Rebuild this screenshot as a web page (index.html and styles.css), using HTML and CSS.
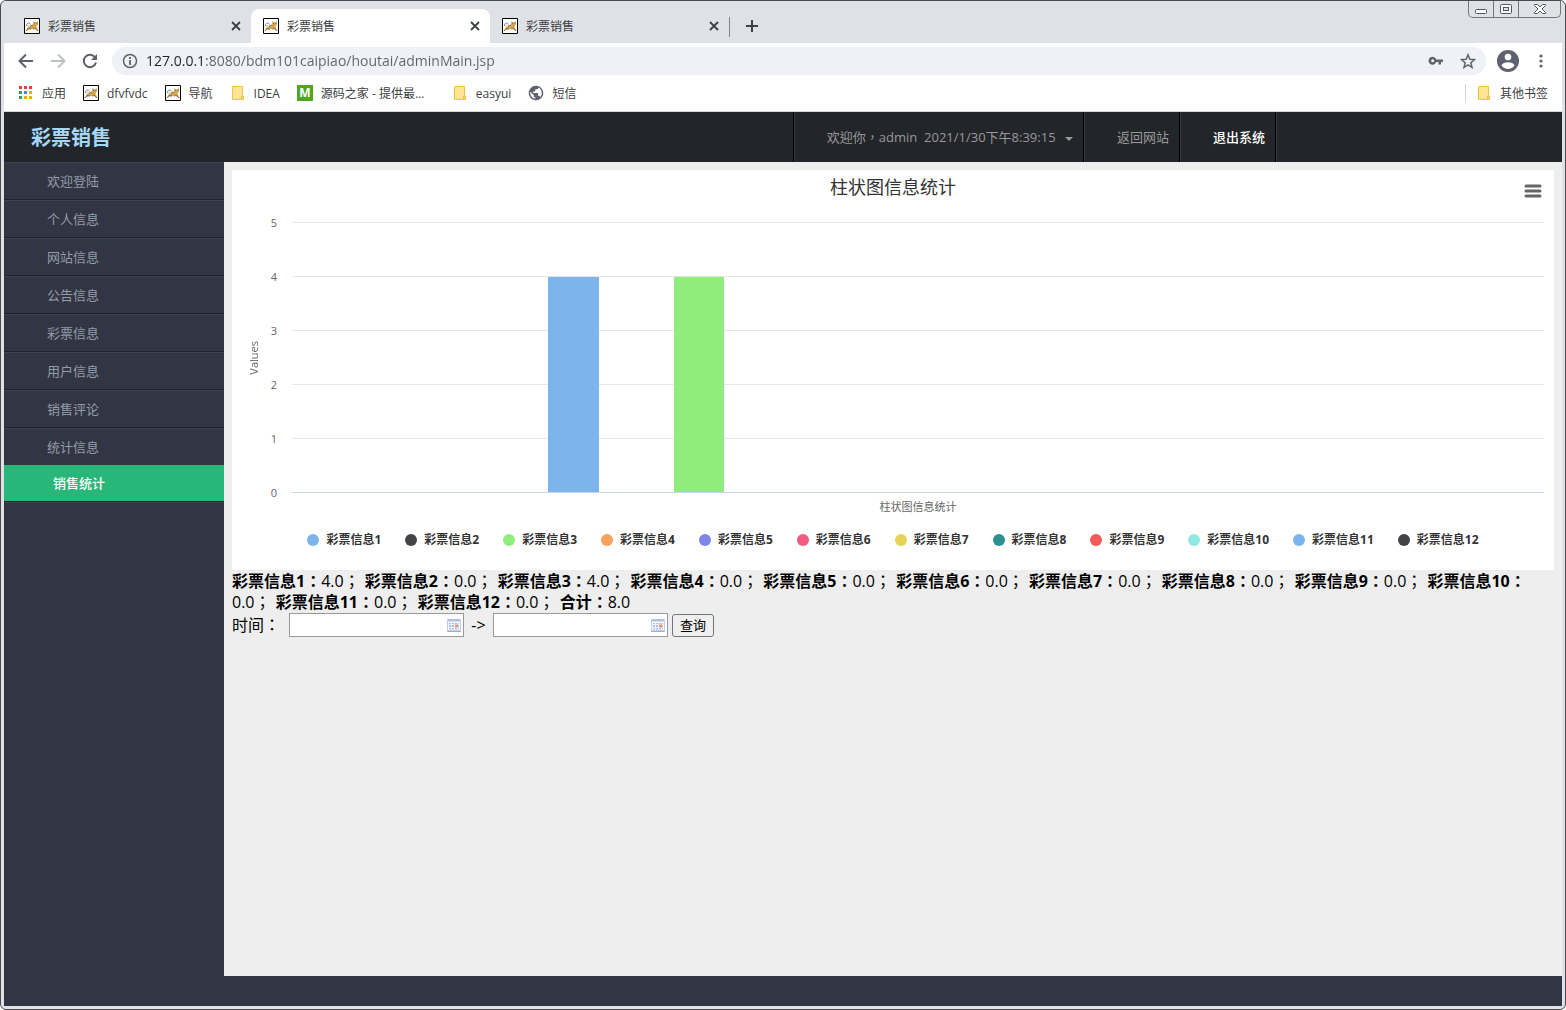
FILE: index.html
```html
<!DOCTYPE html>
<html lang="zh-CN">
<head>
    <meta charset="UTF-8">
    <meta name="viewport" content="width=device-width, initial-scale=1.0">
    <title>彩票销售</title>
    <link rel="stylesheet" href="styles.css">
</head>
<body>
    <!-- shared icons -->
    <svg class="sprite" aria-hidden="true">
        <symbol id="icon-cat" viewBox="0 0 16 16">
            <path d="M.5.5h15v15H.5z" fill="#fff" stroke="#000"/>
            <path d="M2 13l1.500-3.500L6 8l3-1.500.5-3.500 1.500 1.200h1.500L14 3v3.500l-1.500 1.500.5 2 1.500 2.500h-1.500L10.500 10.500 8 11l-3 .5z" fill="#d5a54c"/>
            <path d="M1.800 13.200L4 10.500l3 .5M6 8.500l3-1.500M14 13l-2.500-2.500-2.500.5" fill="none" stroke="#71604a" stroke-width=".8"/>
            <path d="M2.500 8c-.8-3 3.500-4 4-1.500M10 5.500h1M12.300 5.500h1" fill="none" stroke="#667" stroke-width=".8"/>
            <path d="M3 7.500c1-1.500 2-1.500 3 0L4 9z" fill="#cdd3de"/>
        </symbol>
        <symbol id="icon-close" viewBox="0 0 10 10">
            <path d="M1 1l8 8M9 1L1 9" fill="none" stroke="#3c4043" stroke-width="1.800"/>
        </symbol>
        <symbol id="icon-folder" viewBox="0 0 16 16">
            <path d="M2.500 1.500h10v9.500h1v3.500h-11z" fill="#ffe592" stroke="#f0c53f"/>
            <path d="M11.500 14v-3h1.500v3" fill="#ffe592" stroke="#f0c53f"/>
        </symbol>
        <symbol id="icon-calendar" viewBox="0 0 14 14">
            <path d="M.5 1.500h13v11H.5z" fill="#fff" stroke="#c3cde3"/>
            <path d="M1 1h12v2.500H1z" fill="#b3c0dc"/>
            <path d="M2 5h10v6.500H2z" fill="#a9c0ee"/>
            <path d="M1 6.500h12M1 9.500h12M4.500 4v8M7.500 4v8M10.500 4v8" stroke="#eef3fd" fill="none"/>
            <path d="M8 6.500h3v3H8z" fill="#f4936f"/>
            <path d="M0 13.500h14" stroke="#a6adbb"/>
        </symbol>
    </svg>

    <div class="window">
        <div class="tab-strip">
            <div class="tab">
                <svg class="icon"><use href="#icon-cat"/></svg>
                <span class="tab-title">彩票销售</span>
                <button class="tab-close" aria-label="关闭标签页"><svg><use href="#icon-close"/></svg></button>
            </div>
            <div class="tab active">
                <svg class="icon"><use href="#icon-cat"/></svg>
                <span class="tab-title">彩票销售</span>
                <button class="tab-close" aria-label="关闭标签页"><svg><use href="#icon-close"/></svg></button>
            </div>
            <div class="tab last">
                <svg class="icon"><use href="#icon-cat"/></svg>
                <span class="tab-title">彩票销售</span>
                <button class="tab-close" aria-label="关闭标签页"><svg><use href="#icon-close"/></svg></button>
            </div>
            <button class="new-tab" aria-label="新标签页">
                <svg width="12" height="12" viewBox="0 0 12 12"><path d="M6 0v12M0 6h12" stroke="#3c4043" stroke-width="2"/></svg>
            </button>
            <div class="caption-buttons">
                <button aria-label="最小化"><svg width="12" height="10" viewBox="0 0 12 10"><rect x=".5" y="5.500" width="11" height="4" rx="1" fill="#fff" stroke="#53565f"/></svg></button>
                <button aria-label="最大化"><svg width="12" height="10" viewBox="0 0 12 10"><rect x=".5" y=".5" width="11" height="9" rx="1" fill="#fff" stroke="#53565f"/><rect x="3.500" y="3.500" width="5" height="3" fill="#dee1e6" stroke="#53565f"/></svg></button>
                <button class="wide" aria-label="关闭"><svg width="12" height="10" viewBox="0 0 12 10"><path d="M.5.500h3L6 3 8.500.500h3v1L8 5l3.500 3.500v1h-3L6 7 3.500 9.500h-3v-1L4 5 .5 1.500z" fill="#fff" stroke="#53565f"/></svg></button>
            </div>
        </div>

        <div class="toolbar">
            <button aria-label="后退"><svg width="16" height="16" viewBox="0 0 16 16"><path d="M15 8H2M8 1.500L1.500 8 8 14.500" fill="none" stroke="#5f6368" stroke-width="2"/></svg></button>
            <button aria-label="前进"><svg width="16" height="16" viewBox="0 0 16 16"><path d="M1 8h13M8 1.500L14.500 8 8 14.500" fill="none" stroke="#bdc0c4" stroke-width="2"/></svg></button>
            <button aria-label="重新加载"><svg width="16" height="16" viewBox="0 0 16 16"><path d="M13.200 4.500A6.200 6.200 0 1 0 14 9.500" fill="none" stroke="#5f6368" stroke-width="2"/><path d="M15 1v6H9z" fill="#5f6368"/></svg></button>
            <div class="omnibox">
                <svg width="16" height="16" viewBox="0 0 16 16"><circle cx="8" cy="8" r="6.500" fill="none" stroke="#5f6368" stroke-width="1.500"/><path d="M8 7v5M8 4v2" stroke="#5f6368" stroke-width="1.800"/></svg>
                <input class="address" type="text" aria-label="地址" value="127.0.0.1:8080/bdm101caipiao/houtai/adminMain.jsp">
                <svg width="16" height="16" viewBox="0 0 16 16"><path fill-rule="evenodd" d="M8.300 6.500A4 4 0 1 0 8.300 9H10.500V11.500H13V9H15V6.500zM4.700 6.300a1.500 1.500 0 1 1 0 3 1.500 1.500 0 0 1 0-3z" fill="#5f6368"/></svg>
                <svg width="16" height="16" viewBox="0 0 16 16"><path d="M8 1.800l1.800 4.400 4.700.4-3.600 3.100 1.100 4.600L8 11.800l-4 2.500 1.100-4.600L1.500 6.600l4.700-.4z" fill="none" stroke="#5f6368" stroke-width="1.500"/></svg>
            </div>
            <button class="profile" aria-label="用户"><svg width="22" height="22" viewBox="0 0 22 22"><circle cx="11" cy="11" r="11" fill="#5f6070"/><circle cx="11" cy="7" r="3.300" fill="#fff"/><path d="M4.500 15.500c1-4.500 12-4.500 13 0-3 4.500-10 4.500-13 0z" fill="#fff"/></svg></button>
            <button aria-label="菜单"><svg width="16" height="16" viewBox="0 0 16 16" fill="#5f6368"><circle cx="8" cy="3" r="1.600"/><circle cx="8" cy="8" r="1.600"/><circle cx="8" cy="13" r="1.600"/></svg></button>
        </div>

        <div class="bookmarks">
            <a href="#">
                <svg class="icon" viewBox="0 0 16 16"><path d="M1 1h3v3H1zM6 1h3v3H6zM11 1h3v3h-3z" fill="#ea4335"/><path d="M1 6h3v3H1zM1 11h3v3H1z" fill="#34a058"/><path d="M6 6h3v3H6z" fill="#4285f4"/><path d="M11 6h3v3h-3zM6 11h3v3H6zM11 11h3v3h-3z" fill="#fbac05"/></svg>
                应用
            </a>
            <a href="#"><svg class="icon"><use href="#icon-cat"/></svg>dfvfvdc</a>
            <a href="#"><svg class="icon"><use href="#icon-cat"/></svg>导航</a>
            <a href="#"><svg class="icon"><use href="#icon-folder"/></svg>IDEA</a>
            <a href="#" class="long">
                <span class="m-icon">M</span>
                源码之家 - 提供最...
            </a>
            <a href="#"><svg class="icon"><use href="#icon-folder"/></svg>easyui</a>
            <a href="#">
                <svg class="icon" viewBox="1 1 22 22"><path d="M12 2C6.480 2 2 6.480 2 12s4.480 10 10 10 10-4.480 10-10S17.520 2 12 2zm-1 17.930c-3.950-.49-7-3.850-7-7.930 0-.62.08-1.210.21-1.790L9 15v1c0 1.100.9 2 2 2v1.930zm6.900-2.540c-.26-.81-1-1.390-1.900-1.390h-1v-3c0-.55-.45-1-1-1H8v-2h2c.55 0 1-.45 1-1V7h2c1.100 0 2-.9 2-2v-.41c2.930 1.190 5 4.060 5 7.410 0 2.080-.8 3.970-2.100 5.390z" fill="#5f6070"/></svg>
                短信
            </a>
            <a href="#" class="other"><svg class="icon"><use href="#icon-folder"/></svg>其他书签</a>
        </div>

        <header>
            <a href="#" class="logo">彩票销售</a>
            <nav>
                <ul>
                    <li lang="zh-TW"><a href="#">欢迎你，admin&nbsp; 2021/1/30下午8:39:15 <span class="caret"></span></a></li>
                    <li><a href="#">返回网站</a></li>
                    <li><a href="#" class="exit">退出系统</a></li>
                </ul>
            </nav>
        </header>

        <div class="page">
            <aside>
                <ul class="menu">
                    <li><a href="#">欢迎登陆</a></li>
                    <li><a href="#">个人信息</a></li>
                    <li><a href="#">网站信息</a></li>
                    <li><a href="#">公告信息</a></li>
                    <li><a href="#">彩票信息</a></li>
                    <li><a href="#">用户信息</a></li>
                    <li><a href="#">销售评论</a></li>
                    <li>
                        <a href="#">统计信息</a>
                        <ul class="submenu">
                            <li><a href="#">销售统计</a></li>
                        </ul>
                    </li>
                </ul>
            </aside>

            <main>
                <section class="chart">
                    <h2>柱状图信息统计</h2>
                    <button class="chart-menu" aria-label="图表菜单">
                        <svg width="18" height="14" viewBox="0 0 18 14"><path d="M2 2h14M2 7h14M2 12h14" stroke="#666" stroke-width="3" stroke-linecap="round"/></svg>
                    </button>
                    <div class="chart-body">
                        <div class="axis-title">Values</div>
                        <ul class="axis-labels">
                            <li>5</li>
                            <li>4</li>
                            <li>3</li>
                            <li>2</li>
                            <li>1</li>
                            <li>0</li>
                        </ul>
                        <div class="plot-column">
                            <div class="plot">
                                <div class="bar-slot"><div class="bar c1" style="height: 80%"></div></div>
                                <div class="bar-slot"><div class="bar c2" style="height: 0%"></div></div>
                                <div class="bar-slot"><div class="bar c3" style="height: 80%"></div></div>
                                <div class="bar-slot"><div class="bar c4" style="height: 0%"></div></div>
                                <div class="bar-slot"><div class="bar c5" style="height: 0%"></div></div>
                                <div class="bar-slot"><div class="bar c6" style="height: 0%"></div></div>
                                <div class="bar-slot"><div class="bar c7" style="height: 0%"></div></div>
                                <div class="bar-slot"><div class="bar c8" style="height: 0%"></div></div>
                                <div class="bar-slot"><div class="bar c9" style="height: 0%"></div></div>
                                <div class="bar-slot"><div class="bar c10" style="height: 0%"></div></div>
                                <div class="bar-slot"><div class="bar c1" style="height: 0%"></div></div>
                                <div class="bar-slot"><div class="bar c2" style="height: 0%"></div></div>
                            </div>
                            <div class="category">柱状图信息统计</div>
                        </div>
                    </div>
                    <ul class="legend">
                        <li><span class="dot c1"></span>彩票信息1</li>
                        <li><span class="dot c2"></span>彩票信息2</li>
                        <li><span class="dot c3"></span>彩票信息3</li>
                        <li><span class="dot c4"></span>彩票信息4</li>
                        <li><span class="dot c5"></span>彩票信息5</li>
                        <li><span class="dot c6"></span>彩票信息6</li>
                        <li><span class="dot c7"></span>彩票信息7</li>
                        <li><span class="dot c8"></span>彩票信息8</li>
                        <li><span class="dot c9"></span>彩票信息9</li>
                        <li><span class="dot c10"></span>彩票信息10</li>
                        <li><span class="dot c1"></span>彩票信息11</li>
                        <li><span class="dot c2"></span>彩票信息12</li>
                    </ul>
                </section>

                <p class="totals" lang="zh-TW">
                    <span><b>彩票信息1：</b>4.0；</span>
                    <span><b>彩票信息2：</b>0.0；</span>
                    <span><b>彩票信息3：</b>4.0；</span>
                    <span><b>彩票信息4：</b>0.0；</span>
                    <span><b>彩票信息5：</b>0.0；</span>
                    <span><b>彩票信息6：</b>0.0；</span>
                    <span><b>彩票信息7：</b>0.0；</span>
                    <span><b>彩票信息8：</b>0.0；</span>
                    <span><b>彩票信息9：</b>0.0；</span>
                    <span><b>彩票信息10：</b>0.0；</span>
                    <span><b>彩票信息11：</b>0.0；</span>
                    <span><b>彩票信息12：</b>0.0；</span>
                    <span><b>合计：</b>8.0</span>
                </p>

                <form class="search">
                    <label for="startDate" lang="zh-TW">时间：</label>
                    <span class="date-box">
                        <input type="text" id="startDate">
                        <svg><use href="#icon-calendar"/></svg>
                    </span>
                    <label for="endDate" class="arrow">-&gt;</label>
                    <span class="date-box">
                        <input type="text" id="endDate">
                        <svg><use href="#icon-calendar"/></svg>
                    </span>
                    <button type="button">查询</button>
                </form>
            </main>
        </div>
        <footer></footer>
    </div>
</body>
</html>
```
FILE: styles.css
```css
* {
    box-sizing: border-box;
}

body {
    margin: 0;
    font-family: "Open Sans", "Noto Sans CJK SC", sans-serif;
    font-size: 12px;
    color: #000;
    background-color: #fff;
}

/* centred full-width punctuation */
[lang="zh-TW"] {
    font-family: "Open Sans", "Noto Sans CJK TC", sans-serif;
}

ul {
    list-style: none;
    margin: 0;
    padding: 0;
}

a {
    color: inherit;
    text-decoration: none;
}

button {
    font-family: inherit;
    cursor: pointer;
}

.sprite {
    display: none;
}

.icon {
    width: 16px;
    height: 16px;
    flex: none;
}

.window {
    min-height: 100vh;
    display: flex;
    flex-direction: column;
    border: 1px solid #4b4b50;
    border-radius: 6px;
    background-color: #dee1e6;
    padding: 0 3px 3px;
}

/* browser tabs */
.tab-strip {
    display: flex;
    align-items: flex-end;
    height: 42px;
    padding-left: 8px;
    background-color: #dee1e6;
    color: #3c4043;
}

.tab {
    display: flex;
    align-items: center;
    gap: 8px;
    width: 239px;
    height: 34px;
    padding: 0 10px 0 12px;
}

.tab.active {
    background-color: #fff;
    border-radius: 8px 8px 0 0;
}

.tab.last {
    position: relative;
}

.tab.last::after {
    content: "";
    position: absolute;
    right: -1px;
    top: 8px;
    width: 1px;
    height: 20px;
    background-color: #80868b;
}

.tab-title {
    flex: 1;
}

.tab-close,
.new-tab,
.toolbar button,
.caption-buttons button {
    display: flex;
    align-items: center;
    justify-content: center;
    padding: 0;
    border: none;
    background: none;
}

.tab-close svg {
    width: 10px;
    height: 10px;
}

.new-tab {
    width: 28px;
    height: 34px;
    margin-left: 9px;
}

.caption-buttons {
    display: flex;
    align-self: flex-start;
    height: 17px;
    margin-left: auto;
    margin-right: 1px;
    border: 1px solid #75777e;
    border-top: none;
    border-radius: 0 0 5px 5px;
}

.caption-buttons button {
    width: 25px;
    border-right: 1px solid #75777e;
}

.caption-buttons .wide {
    width: 41px;
    border-right: none;
}

/* address bar */
.toolbar {
    display: flex;
    align-items: center;
    gap: 16px;
    height: 36px;
    padding: 0 13px 0 14px;
    background-color: #fff;
}

.omnibox {
    flex: 1;
    display: flex;
    align-items: center;
    gap: 16px;
    height: 28px;
    margin-left: -2px;
    padding: 0 10px;
    border-radius: 14px;
    background-color: #eef1f6;
}

/* host in black, the rest of the address in grey */
.address {
    flex: 1;
    margin-left: -8px;
    padding: 0;
    border: none;
    outline: none;
    font-family: inherit;
    font-size: 14px;
    line-height: 20px;
    color: #5f6368;
    -webkit-text-fill-color: transparent;
    background: linear-gradient(90deg, #202124 60px, #5f6368 60px);
    -webkit-background-clip: text;
    background-clip: text;
}

.toolbar .profile {
    margin-left: -5px;
    margin-right: -2px;
}

.bookmarks {
    display: flex;
    align-items: center;
    gap: 17px;
    height: 33px;
    padding: 0 14px 4px;
    background-color: #fff;
    border-bottom: 1px solid #d5d8dc;
    color: #3c4043;
}

.bookmarks a {
    display: flex;
    align-items: center;
    gap: 8px;
}

.bookmarks .long {
    width: 138px;
}

.bookmarks .other {
    margin-left: auto;
    padding-left: 10px;
    border-left: 1px solid #d0d3d8;
}

.m-icon {
    width: 16px;
    height: 16px;
    background-color: #4fa620;
    color: #fff;
    font-weight: bold;
    line-height: 16px;
    text-align: center;
}

/* admin header */
header {
    display: flex;
    justify-content: space-between;
    align-items: center;
    height: 50px;
    padding-right: 285px;
    background-color: #222529;
    font-size: 13px;
    color: #999;
}

.logo {
    padding-left: 27px;
    padding-bottom: 2px;
    font-size: 20px;
    font-weight: bold;
    color: #a5d8f8;
}

nav ul {
    display: flex;
    border-left: 1px solid #000;
    border-right: 1px solid #323544;
}

nav li {
    border-left: 1px solid #323544;
    border-right: 1px solid #000;
}

nav a {
    display: block;
    padding: 0 10px 0 32px;
    line-height: 50px;
}

nav .exit {
    color: #fff;
    font-weight: 500;
}

.caret {
    display: inline-block;
    margin-left: 6px;
    border-top: 4px solid #999;
    border-left: 4px solid transparent;
    border-right: 4px solid transparent;
    vertical-align: middle;
}

/* sidebar */
.page {
    flex: 1;
    display: flex;
    background-color: #323544;
}

aside {
    width: 220px;
    flex: none;
    font-size: 13px;
    color: #939da8;
}

.menu {
    border-bottom: 1px solid #3e4252;
}

.menu > li {
    border-top: 1px solid #3e4252;
    border-bottom: 1px solid #1f2127;
}

.menu > li > a {
    display: block;
    padding-left: 43px;
    line-height: 36px;
}

.submenu a {
    display: block;
    padding-left: 49px;
    line-height: 36px;
    background-color: #28b779;
    color: #fff;
    font-weight: 500;
}

/* content */
main {
    flex: 1;
    min-width: 0;
    padding: 8px;
    background-color: #eee;
    font-size: 16px;
}

.chart {
    position: relative;
    padding-bottom: 18px;
    background-color: #fff;
}

.chart h2 {
    margin: 0;
    padding-top: 10px;
    font-size: 18px;
    font-weight: normal;
    line-height: 15px;
    text-align: center;
    color: #333;
}

.chart-menu {
    position: absolute;
    top: 14px;
    right: 12px;
    padding: 0;
    border: none;
    background: none;
    line-height: 0;
}

.chart-body {
    display: flex;
    align-items: center;
    padding: 0 10px 0 14px;
    font-size: 11px;
    color: #666;
}

.axis-title {
    width: 16px;
    line-height: 16px;
    writing-mode: vertical-rl;
    transform: rotate(180deg);
}

.axis-labels {
    width: 15px;
    text-align: right;
}

.axis-labels li {
    line-height: 54px;
}

.plot-column {
    flex: 1;
    margin-left: 15px;
    padding-top: 27px;
}

.plot {
    display: flex;
    align-items: flex-end;
    height: 271px;
    padding: 0 20%;
    border-bottom: 1px solid #ccd6eb;
    background-image: linear-gradient(#e6e6e6 1px, transparent 1px);
    background-size: 100% 54px;
}

.bar-slot {
    flex: 1;
    display: flex;
    align-items: flex-end;
    height: 100%;
    padding: 0 6px;
}

.bar {
    width: 100%;
    border-top: 1px solid transparent;
    background-clip: padding-box;
}

.category {
    line-height: 28px;
    text-align: center;
}

.legend {
    display: flex;
    justify-content: center;
    gap: 24px;
    padding-top: 7px;
    font-size: 12px;
    font-weight: bold;
    line-height: 24px;
    color: #333;
}

.legend li {
    display: flex;
    align-items: center;
    gap: 7px;
}

.dot {
    width: 12px;
    height: 12px;
    border-radius: 50%;
}

/* series colours */
.c1 { background-color: #7cb5ec; }
.c2 { background-color: #434348; }
.c3 { background-color: #90ed7d; }
.c4 { background-color: #f7a35c; }
.c5 { background-color: #8085e9; }
.c6 { background-color: #f15c80; }
.c7 { background-color: #e4d354; }
.c8 { background-color: #2b908f; }
.c9 { background-color: #f45b5b; }
.c10 { background-color: #91e8e1; }

.totals {
    margin: 0;
    padding-top: 1px;
    line-height: 21px;
}

.totals span {
    margin-right: 1px;
}

.search {
    display: flex;
    align-items: center;
    line-height: 24px;
}

.search label {
    width: 57px;
}

.search .arrow {
    width: 29px;
    text-align: center;
}

.date-box {
    position: relative;
    display: flex;
}

.date-box input {
    width: 175px;
    height: 24px;
    padding: 0 20px 0 2px;
    border: 1px solid #999;
    background-color: #fff;
}

.date-box svg {
    position: absolute;
    top: 5px;
    right: 3px;
    width: 14px;
    height: 14px;
}

.search button {
    height: 23px;
    margin-left: 4px;
    padding: 0 7px;
    border: 1px solid #767676;
    border-radius: 3px;
    background-color: #efefef;
    font-size: 13px;
    line-height: 21px;
}

footer {
    height: 30px;
    background-color: #323544;
}
```
